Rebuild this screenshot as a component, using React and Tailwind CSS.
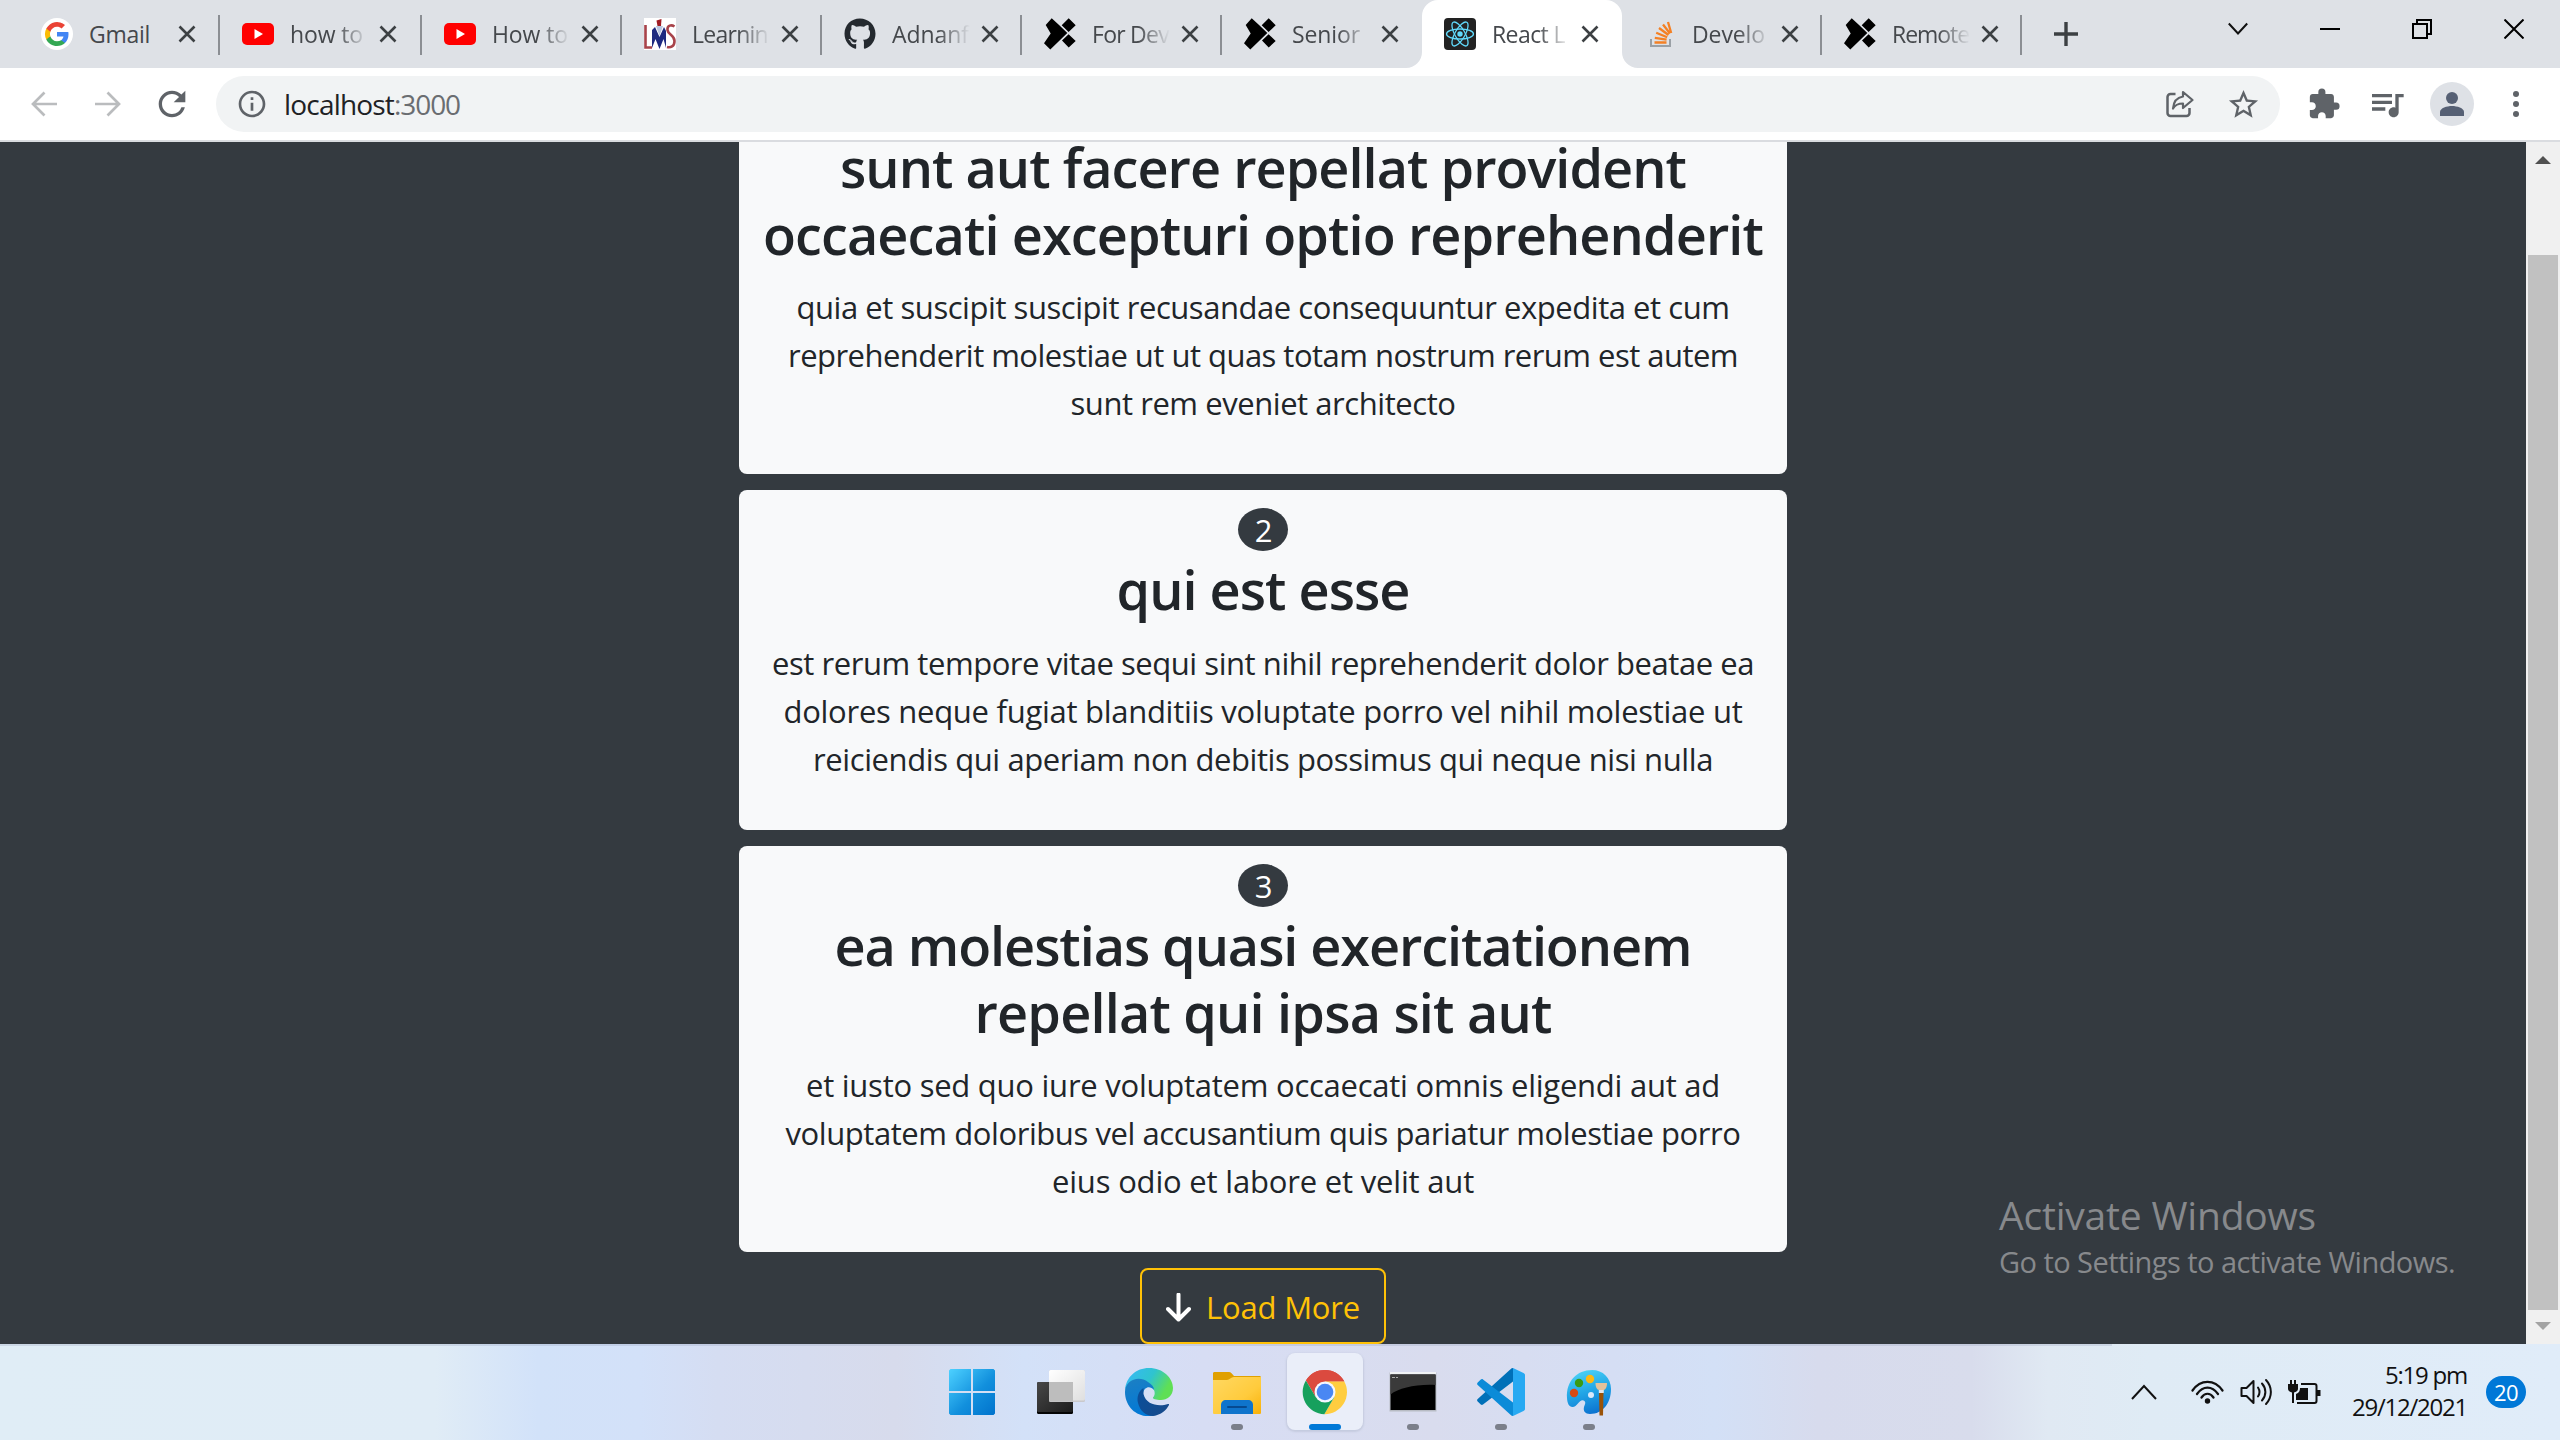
import React, { useLayoutEffect, useRef, useState } from "react";
import { FaGithub } from "react-icons/fa";
import { MdExtension, MdQueueMusic, MdStarBorder, MdInfoOutline, MdRefresh } from "react-icons/md";

/* Text whose tracking is computed so that the line is exactly `w` pixels wide. */
function Fit({ w, children, className = "" }) {
  const ref = useRef(null);
  const [ls, setLs] = useState(0);
  useLayoutEffect(() => {
    const n = String(children).length;
    const natural = ref.current.getBoundingClientRect().width - ls * n;
    setLs((w - natural) / n);
  }, []);
  return (
    <span ref={ref} className={`inline-block whitespace-nowrap ${className}`} style={{ letterSpacing: `${ls}px` }}>
      {children}
    </span>
  );
}

const Google = () => (
  <svg viewBox="0 0 32 32" className="size-8">
    <circle cx="16" cy="16" r="16" fill="#fff" />
    <g transform="translate(4 4)">
      <path fill="#4285F4" d="M23.5 12.3c0-.9-.1-1.500-.2-2.200H12v4.500h6.500c-.3 1.600-1.100 2.700-2.400 3.600v2.900h3.900c2.200-2.100 3.500-5.100 3.500-8.800z" />
      <path fill="#34A853" d="M12 24c3.200 0 6-1.100 8-2.900l-3.900-2.900c-1.100.7-2.500 1.100-4.100 1.100-3.100 0-5.800-2.100-6.700-5H1.300v3.100C3.300 21.300 7.300 24 12 24z" />
      <path fill="#FBBC05" d="M5.300 14.300a7.200 7.200 0 0 1 0-4.600V6.600h-4a12 12 0 0 0 0 10.800z" />
      <path fill="#EA4335" d="M12 4.700c1.800 0 3.300.6 4.600 1.800L20 3.100A12 12 0 0 0 1.300 6.600l4 3.100c.9-2.900 3.600-5 6.700-5z" />
    </g>
  </svg>
);
const YouTube = () => (
  <svg viewBox="0 0 32 32" className="size-8">
    <rect x="0" y="5" width="32" height="22" rx="5" fill="#f00" />
    <path d="M12.500 11v10l8.500-5z" fill="#fff" />
  </svg>
);
const Lms = () => (
  <svg viewBox="0 0 32 32" className="size-8">
    <rect width="32" height="32" fill="#fff" />
    <path d="M1.500 7v22.500H8M30.500 8.500c-3-2-7.500-1.500-7 3.500.5 5 7 5 7 11 0 5.500-4 7-7.500 6" fill="none" stroke="#a8434a" strokeWidth="2.600" />
    <path d="M8 30V12l3-3 4.500 10L20 9l2 4v17l-2.500-9-4 10-4-10z" fill="#1d2a80" />
    <path d="M12 8l3.500 10L19 8z" fill="#b9c6e0" />
    <path d="M12.500 2.500l5-1.500-.5 7h-3.500z" fill="#a01c24" />
  </svg>
);
const Crossover = () => (
  <svg viewBox="0 0 32 32" className="size-8">
    <path d="M7.700 .3L1.700 7L6.700 15.500L0 25.300L6.300 31.500L23.300 15L14.500 6.500z" fill="#000" />
    <path d="M24.700 .3L31.700 7.300L24.600 14L17.700 7.300zM24.600 16.200L31.700 23L24.700 29.500L18 22.500z" fill="#000" />
  </svg>
);
const ReactLogo = () => (
  <svg viewBox="0 0 32 32" className="size-8">
    <rect width="32" height="32" rx="4" fill="#222" />
    <circle cx="16" cy="16" r="2.700" fill="#61dafb" />
    <g fill="none" stroke="#61dafb" strokeWidth="1.300">
      <ellipse cx="16" cy="16" rx="13.500" ry="5" />
      <ellipse cx="16" cy="16" rx="13.500" ry="5" transform="rotate(60 16 16)" />
      <ellipse cx="16" cy="16" rx="13.500" ry="5" transform="rotate(120 16 16)" />
    </g>
  </svg>
);
const Stack = () => (
  <svg viewBox="0 0 32 32" className="size-8">
    <path d="M7 21v7h19v-7" fill="none" stroke="#9aa0a6" strokeWidth="2" />
    <g stroke="#f48024" strokeWidth="2.300">
      <path d="M10.500 24.500h12M10.800 19.800l11.800 1.800M12.200 14.800l11 4.500M15 10l9.500 7M19 6.500l7 9M24 4l3.200 11" />
    </g>
  </svg>
);

const tabs = [
  { icon: <Google />, text: "Gmail", w: 61, box: "w-[201px]" },
  { icon: <YouTube />, text: "how to", w: 73, box: "w-[202px]", fade: true },
  { icon: <YouTube />, text: "How to", w: 76, box: "w-[200px]", fade: true },
  { icon: <Lms />, text: "Learnin", w: 76, box: "w-[200px]", fade: true },
  { icon: <FaGithub className="size-8 text-[#24292f]" />, text: "Adnanf", w: 77, box: "w-[200px]", fade: true },
  { icon: <Crossover />, text: "For Dev", w: 77, box: "w-[200px]", fade: true },
  { icon: <Crossover />, text: "Senior", w: 68, box: "w-[200px]", fade: true, last: true },
  { icon: <ReactLogo />, text: "React L", w: 73, box: "w-[200px]", fade: true, active: true, last: true },
  { icon: <Stack />, text: "Develo", w: 73, box: "w-[200px]", fade: true },
  { icon: <Crossover />, text: "Remote", w: 77, box: "w-[200px]", fade: true },
];

function Tab({ t }) {
  return (
    <div className={`relative flex h-[68px] shrink-0 items-center pl-[22px] ${t.box} ${t.active ? "rounded-t-2xl bg-white" : ""}`}>
      {t.active && (
        <>
          <svg className="absolute bottom-0 -left-4 size-4" viewBox="0 0 16 16"><path d="M16 0v16H0A16 16 0 0 0 16 0z" fill="#fff" /></svg>
          <svg className="absolute -right-4 bottom-0 size-4" viewBox="0 0 16 16"><path d="M0 0v16h16A16 16 0 0 1 0 0z" fill="#fff" /></svg>
        </>
      )}
      <span className="shrink-0">{t.icon}</span>
      <span className={`ml-4 h-[34px] w-[79px] text-[23px] leading-[34px] text-[#45484c] ${t.fade ? "[mask-image:linear-gradient(to_right,black_46px,transparent_78px)]" : ""}`}>
        <Fit w={t.w}>{t.text}</Fit>
      </span>
      <svg viewBox="0 0 18 18" className="ml-[10px] size-[18px]"><path d="M1.500 1.500l15 15M16.500 1.500l-15 15" stroke="#3c4043" strokeWidth="2.600" /></svg>
      {!t.last && <span className="absolute top-[15px] right-0 h-10 w-[2px] bg-[#8b8e93]" />}
    </div>
  );
}

function TabStrip() {
  return (
    <div className="flex h-[68px] bg-[#dee1e6] pl-[19px]">
      {tabs.map((t, i) => <Tab key={i} t={t} />)}
      <div className="flex items-center pl-[32px]">
        <svg viewBox="0 0 24 24" className="size-6"><path d="M12 0v24M0 12h24" stroke="#3c4043" strokeWidth="3.400" /></svg>
      </div>
      <div className="ml-auto flex h-[58px] items-center gap-[72px] pr-9">
        <svg viewBox="0 0 20 20" className="size-5"><path d="M.8 4.500L10 14.500 19.200 4.500" fill="none" stroke="#111" strokeWidth="2" /></svg>
        <svg viewBox="0 0 20 20" className="size-5"><path d="M0 10h20" stroke="#000" strokeWidth="2" /></svg>
        <svg viewBox="0 0 20 20" className="size-5"><path d="M1 5h14v14H1zM5 5V1h14v14h-4" fill="none" stroke="#000" strokeWidth="2" /></svg>
        <svg viewBox="0 0 20 20" className="size-5"><path d="M.5.5l19 19M19.500.5l-19 19" stroke="#000" strokeWidth="2" /></svg>
      </div>
    </div>
  );
}

function Toolbar() {
  return (
    <div className="flex h-[74px] items-center border-b-2 border-[#dadce0] bg-white pl-[31px]">
      <svg viewBox="0 0 26 26" className="size-[26px]"><path d="M26 13H2M13.500 1.500L2 13l11.500 11.500" fill="none" stroke="#babcbe" strokeWidth="2.700" /></svg>
      <svg viewBox="0 0 26 26" className="ml-[38px] size-[26px]"><path d="M0 13h24M12.500 1.500L24 13 12.500 24.500" fill="none" stroke="#babcbe" strokeWidth="2.700" /></svg>
      <MdRefresh className="ml-[31px] size-10 text-[#5f6368]" />
      <div className="ml-[24px] flex h-14 w-[2064px] items-center rounded-full bg-[#f1f3f4] pl-5 pr-[19px]">
        <MdInfoOutline className="size-8 text-[#5f6368]" />
        <span className="-mt-px ml-4 flex text-[28px] leading-[38px]">
          <Fit w={110} className="text-[#202124]">localhost</Fit>
          <Fit w={66} className="text-[#6a6d71]">:3000</Fit>
        </span>
        <svg viewBox="0 0 28 28" className="ml-auto size-7" fill="none" stroke="#5f6368" strokeWidth="2.500" strokeLinejoin="round">
          <path d="M9.500 4H4.500A3 3 0 0 0 1.500 7v16a3 3 0 0 0 3 3h16a3 3 0 0 0 3-3v-5" />
          <path d="M17 2l9.500 8L17 18v-4.500c-4.500 0-8 1.500-10 5C7.500 12.500 10.500 7.500 17 6.500z" strokeWidth="2.200" />
        </svg>
        <MdStarBorder className="ml-[32px] size-[35px] text-[#5f6368]" />
      </div>
      <MdExtension className="ml-[27px] size-[34px] text-[#5f6368]" />
      <MdQueueMusic className="ml-[26px] size-10 text-[#5f6368]" />
      <span className="ml-[23px] flex size-11 items-center justify-center rounded-full bg-[#dee1e6]">
        <svg viewBox="0 0 24 24" className="size-6"><circle cx="12" cy="6" r="6" fill="#566074" /><path d="M0 24v-4c0-4 7-6 12-6s12 2 12 6v4z" fill="#566074" /></svg>
      </span>
      <svg viewBox="0 0 6 26" className="ml-[39px] h-[26px] w-[6px]" fill="#5f6368"><circle cx="3" cy="3" r="3" /><circle cx="3" cy="13" r="3" /><circle cx="3" cy="23" r="3" /></svg>
    </div>
  );
}

const posts = [
  {
    id: 1, box: "h-[406px]",
    title: [["sunt aut facere repellat provident", 846], ["occaecati excepturi optio reprehenderit", 1000]],
    body: [["quia et suscipit suscipit recusandae consequuntur expedita et cum", 933], ["reprehenderit molestiae ut ut quas totam nostrum rerum est autem", 950], ["sunt rem eveniet architecto", 385]],
  },
  {
    id: 2, box: "h-[340px]",
    title: [["qui est esse", 293]],
    body: [["est rerum tempore vitae sequi sint nihil reprehenderit dolor beatae ea", 982], ["dolores neque fugiat blanditiis voluptate porro vel nihil molestiae ut", 959], ["reiciendis qui aperiam non debitis possimus qui neque nisi nulla", 900]],
  },
  {
    id: 3, box: "h-[406px]",
    title: [["ea molestias quasi exercitationem", 857], ["repellat qui ipsa sit aut", 577]],
    body: [["et iusto sed quo iure voluptatem occaecati omnis eligendi aut ad", 914], ["voluptatem doloribus vel accusantium quis pariatur molestiae porro", 955], ["eius odio et labore et velit aut", 422]],
  },
];

function Post({ p }) {
  return (
    <article className={`w-[1048px] shrink-0 rounded-lg bg-[#f8f9fa] pt-[18px] text-center text-[#212529] ${p.box}`}>
      <div className="mx-auto flex h-[43px] w-[50px] items-center justify-center rounded-[50%] bg-[#343a40] pt-[2px] text-[31px] leading-none tracking-[-1px] text-white">{p.id}</div>
      <h2 className="mt-[5px] text-[54px] leading-[66.500px] font-semibold">
        {p.title.map(([s, w]) => <span key={s} className="block h-[66.500px]"><Fit w={w}>{s}</Fit></span>)}
      </h2>
      <div className="mt-[16px] text-[31px] leading-12">
        {p.body.map(([s, w]) => <p key={s} className="h-12"><Fit w={w}>{s}</Fit></p>)}
      </div>
    </article>
  );
}

function Page() {
  return (
    <div className="flex h-[1202px] bg-[#343a40]">
      <main className="relative flex h-full flex-1 flex-col items-center justify-end gap-4 overflow-hidden">
        {posts.map((p) => <Post key={p.id} p={p} />)}
        <button className="flex h-[76px] w-[246px] shrink-0 items-center rounded-lg border-2 border-[#ffc107] pt-[2px] pl-6 text-[31px] leading-12 text-[#ffc107]">
          <svg viewBox="0 0 25 29" className="h-[29px] w-[25px]"><path d="M12.500 1.500v24M2 16l10.500 10.500L23 16" fill="none" stroke="#fff" strokeWidth="4" strokeLinecap="round" strokeLinejoin="round" /></svg>
          <Fit w={154} className="ml-[15px]">Load More</Fit>
        </button>
        <aside className="absolute top-[1047px] left-[1999px] text-[#87898c]">
          <p className="text-[39px] leading-[52px]"><Fit w={317}>Activate Windows</Fit></p>
          <p className="text-[29px] leading-[41px]"><Fit w={456}>Go to Settings to activate Windows.</Fit></p>
        </aside>
      </main>
      <div className="flex w-[34px] flex-col items-center bg-[#f0f0f0]">
        <svg viewBox="0 0 16 8" className="mt-[14px] h-2 w-4"><path d="M0 8l8-8 8 8z" fill="#505050" /></svg>
        <div className="mt-[91px] h-[1055px] w-[30px] bg-[#c1c1c1]" />
        <svg viewBox="0 0 16 8" className="mt-3 h-2 w-4"><path d="M0 0l8 8 8-8z" fill="#a3a3a3" /></svg>
      </div>
    </div>
  );
}

const Windows = () => (
  <svg viewBox="0 0 48 48" className="size-12">
    <defs><linearGradient id="win" gradientUnits="userSpaceOnUse" x1="1" y1="1" x2="47" y2="47"><stop stopColor="#4cd0ff" /><stop offset=".55" stopColor="#1290dd" /><stop offset="1" stopColor="#0072cc" /></linearGradient></defs>
    <path d="M1.500 1H22v22H0V2.500zM24 1h20.500L46 2.500V23H24zM0 25h22v22H1.500L0 45.500zM24 25h22v20.500L44.500 47H24z" fill="url(#win)" />
  </svg>
);
const TaskView = () => (
  <svg viewBox="0 0 48 48" className="size-12">
    <defs>
      <linearGradient id="tvd" x1="0" y1="0" x2="1" y2="1"><stop stopColor="#484848" /><stop offset="1" stopColor="#1c1c1c" /></linearGradient>
      <linearGradient id="tvl" x1="0" y1="0" x2="1" y2="1"><stop stopColor="#fff" /><stop offset="1" stopColor="#dfdfdf" /></linearGradient>
    </defs>
    <rect x="0" y="14" width="36" height="32" rx="1.500" fill="#050505" />
    <rect x="0" y="14" width="36" height="30" rx="1.500" fill="url(#tvd)" />
    <rect x="12" y="2" width="36" height="32" rx="1.500" fill="#c9c9cc" />
    <rect x="12" y="2" width="36" height="30.500" rx="1.500" fill="url(#tvl)" />
    <path d="M12 14h24v19.500H13a1 1 0 0 1-1-1z" fill="#bdbdbd" />
  </svg>
);
const Edge = () => (
  <svg viewBox="0 0 48 48" className="size-12">
    <defs>
      <linearGradient id="e1" x1="0" y1=".2" x2="1" y2=".6"><stop stopColor="#36b9f4" /><stop offset=".5" stopColor="#2fc4cf" /><stop offset=".9" stopColor="#5fdf55" /></linearGradient>
      <linearGradient id="e2" x1=".3" y1="0" x2=".6" y2="1"><stop stopColor="#1b7fc4" /><stop offset="1" stopColor="#0078d7" /></linearGradient>
      <linearGradient id="e3" x1="0" y1="0" x2="1" y2=".5"><stop stopColor="#0a4f9b" /><stop offset="1" stopColor="#164a8c" /></linearGradient>
    </defs>
    <path d="M0 22C1 9 11 0 24 0c14 0 24 10 24 20 0 8-6 12-12 12-5 0-8.500-1-8-2.500 3-3 2-9-3-11.500C16 13 3 13 0 22z" fill="url(#e1)" />
    <path d="M0 24C0 12 14 7 23 14c4 2.500 6 5 6 8-4-5-10-3-11 3-.5 8 6 18 13 22C14 52 0 40 0 24z" fill="url(#e2)" />
    <path d="M18.500 20c-5 3-7 9-5.500 15 2 8 8 13 15 13 8-1 13.500-6 16-11 .3-1-.4-1.300-1-1C34 39 21 37 18.500 26z" fill="url(#e3)" />
  </svg>
);
const Folder = () => (
  <svg viewBox="0 0 48 48" className="size-12">
    <defs><linearGradient id="fo" x1="0" y1="0" x2="1" y2="1"><stop stopColor="#ffd862" /><stop offset=".6" stopColor="#ffcb3c" /><stop offset="1" stopColor="#f9b10a" /></linearGradient></defs>
    <path d="M0 5.500C0 4.500.7 4 1.500 4H16c1 0 1.700.4 2.300 1L21 8h25.500c1 0 1.500.7 1.500 1.500V20H0z" fill="#e0a000" />
    <path d="M0 12h14c2.500 0 4-3 7-3h27v35.500c0 1-.6 1.500-1.500 1.500h-45C.5 46 0 45.500 0 44.500z" fill="url(#fo)" />
    <path d="M8 46V37c0-3 2-5 5-5h22c3 0 5 2 5 5v9z" fill="#0f74cc" />
    <path d="M15 39h18" stroke="#064a91" strokeWidth="2" strokeLinecap="round" />
  </svg>
);
const Chrome = () => (
  <svg viewBox="0 0 46 46" className="size-[46px]">
    <path d="M3.900 11.500A22.200 22.200 0 0 1 42.300 12.400H23z" fill="#db4a3f" />
    <path d="M3.900 11.500L13.800 28.300 23 23V12.400h19.300A22.200 22.200 0 0 0 3.900 11.500z" fill="#db4a3f" />
    <path d="M23 12.400h19.300a22.200 22.200 0 0 1-20 32.800l9.900-16.900z" fill="#ffcd40" />
    <path d="M3.900 11.500A22.200 22.200 0 0 0 22.300 45.200L32.200 28.300H13.800z" fill="#16a05d" />
    <circle cx="23" cy="23" r="10.500" fill="#f4f6ff" />
    <circle cx="23" cy="23" r="8.300" fill="#4a87f3" />
  </svg>
);
const Terminal = () => (
  <svg viewBox="0 0 48 40" className="h-10 w-12">
    <rect x=".5" y=".5" width="47" height="39" fill="#b7bbc3" />
    <rect x="1" y="0" width="46" height="2.500" fill="#f1f3f5" />
    <rect x="1.500" y="2.500" width="45" height="35.500" fill="#000" />
    <path d="M1.500 2.500h45V13C27 12 10 16 1.500 22.500z" fill="#3a3a3a" />
    <path d="M3 5.500h3M7 5.500h2" stroke="#aaa" strokeWidth="1" />
  </svg>
);
const VsCode = () => (
  <svg viewBox="0 0 48 48" className="size-12">
    <path d="M36 0v13.500L6 36.500c-.8.600-1.500.5-2.200-.1L.7 33.600c-.8-.8-.8-1.900 0-2.600L33.500 1.200C34.300.4 35 0 36 0z" fill="#0070b8" />
    <path d="M36 48V34.500L6 11.500c-.8-.6-1.500-.5-2.200.1L.7 14.400c-.8.800-.8 1.900 0 2.600l32.800 29.800c.8.800 1.500 1.200 2.500 1.200z" fill="#0b8bd8" />
    <path d="M36 0l10.500 5c1 .5 1.500 1.200 1.500 2.200v33.600c0 1-.5 1.700-1.500 2.200L36 48z" fill="#27a9f2" />
  </svg>
);
const Paint = () => (
  <svg viewBox="0 0 48 48" className="size-12">
    <defs><linearGradient id="pa" x1=".3" y1="0" x2=".6" y2="1"><stop stopColor="#4bd3f7" /><stop offset=".5" stopColor="#22a5e6" /><stop offset="1" stopColor="#0b72d0" /></linearGradient></defs>
    <path d="M2 30C1 13 12 2 27 2c11 0 19 8 19 19 0 14-8 25-21 25-5 0-7-3-6-7 1-3 2.500-5-.5-6.500-4-1.500-6 6.500-11 6.500-3.500 0-5.300-4-5.500-9z" fill="url(#pa)" />
    <circle cx="26" cy="27" r="3" fill="#d9e9fb" />
    <circle cx="9" cy="25" r="4.200" fill="#d84b14" />
    <circle cx="14" cy="15" r="4.200" fill="#3a9b15" />
    <circle cx="25" cy="11" r="4.200" fill="#fdb813" />
    <path d="M34 24h4.500L38 47.500h-3.500z" fill="#9a5208" />
    <path d="M33.800 21h5v4h-5z" fill="#e4e6ea" />
    <path d="M30.500 15h11.500c0 4-1.500 7-3.500 7h-4.500c-2 0-3.500-3-3.500-7z" fill="#e3c19a" />
  </svg>
);

const apps = [
  { icon: <Windows /> }, { icon: <TaskView /> }, { icon: <Edge /> }, { icon: <Folder />, open: true },
  { icon: <Chrome />, active: true }, { icon: <Terminal />, open: true }, { icon: <VsCode />, open: true }, { icon: <Paint />, open: true },
];

function Taskbar() {
  return (
    <div className="relative flex h-24 bg-[linear-gradient(90deg,#e0edf6_0%,#e0ecf6_17%,#d2e2f9_21%,#d3e1f9_25%,#d5ddf2_28%,#d7dbec_35%,#d3e1f8_40%,#d7ddf4_47%,#d9dcee_56%,#d5def4_63%,#d3e0f6_67%,#d7dbed_71%,#d8dcec_77%,#e0e9f3_80%,#dfebf5_84%,#e0ecf9_100%)]">
      <span className="absolute top-0 left-0 h-[2px] w-[2112px] bg-[#8c96b4]/25" />
      <div className="ml-[929px] flex">
        {apps.map((a, i) => (
          <div key={i} className="flex w-[88px] justify-center pt-[9px]">
            <div className={`flex h-[77px] w-[76px] flex-col items-center rounded-lg pt-[15px] ${a.active ? "bg-[#eaeef9] shadow-[0_1px_2px_1px_#c5cbdf]" : ""}`}>
              <div className="flex h-12 items-center">{a.icon}</div>
              {a.open && <span className="mt-2 h-[6px] w-3 rounded-full bg-[#7b7f8a]" />}
              {a.active && <span className="mt-2 h-[6px] w-8 rounded-full bg-[#0078d7]" />}
            </div>
          </div>
        ))}
      </div>
      <div className="ml-auto flex items-center pr-[34px]">
        <svg viewBox="0 0 26 16" className="h-4 w-[26px]"><path d="M1 15L13 2l12 13" fill="none" stroke="#111" strokeWidth="2" /></svg>
        <svg viewBox="0 0 33 26" className="ml-[34px] h-[26px] w-[33px]" fill="none" stroke="#111" strokeWidth="2.200" strokeLinecap="round">
          <path d="M1.500 11.500C9.500 0 23.500 0 31.500 11.500M6 15C12 6.500 21 6.500 27 15M10.500 18.500c3.500-5 8.500-5 12 0" />
          <circle cx="16.500" cy="22" r="1.600" fill="#111" />
        </svg>
        <svg viewBox="0 0 33 28" className="ml-4 h-7 w-[33px]" fill="none" stroke="#111" strokeWidth="2" strokeLinecap="round" strokeLinejoin="round">
          <path d="M1.500 10h5l7-7v22l-7-7h-5zM18 9.500c2 3 2 6 0 9M22 5.500c4.500 5 4.500 12 0 17M26 2c6.500 7 6.500 17 0 24" />
        </svg>
        <svg viewBox="0 0 33 26" className="ml-[15px] h-[26px] w-[33px]">
          <path d="M9 24h17.500a2 2 0 0 0 2-2V7a2 2 0 0 0-2-2H13" fill="none" stroke="#111" strokeWidth="2" />
          <path d="M29 11h3.500v6H29zM12 9h8v12H8v-6c3-1 4-3 4-6zM0 5h10v5c0 2-2 3-4 3.500V24H4V13.500C2 13 0 12 0 10zM2 1h2v4H2zM6 1h2v4H6z" fill="#111" />
        </svg>
        <div className="-mt-[2px] ml-[31px] flex w-[115px] flex-col items-end text-[24px] leading-8 text-[#111]">
          <Fit w={82}>5:19 pm</Fit>
          <Fit w={115}>29/12/2021</Fit>
        </div>
        <span className="ml-[19px] flex h-8 w-10 items-center justify-center rounded-full bg-[#0078d7] text-[22px] text-white"><Fit w={24}>20</Fit></span>
      </div>
    </div>
  );
}

export default function App() {
  return (
    <div className="h-[1440px] w-[2560px] overflow-hidden bg-white font-['Open_Sans','Noto_Sans',sans-serif]">
      <TabStrip />
      <Toolbar />
      <Page />
      <Taskbar />
    </div>
  );
}
